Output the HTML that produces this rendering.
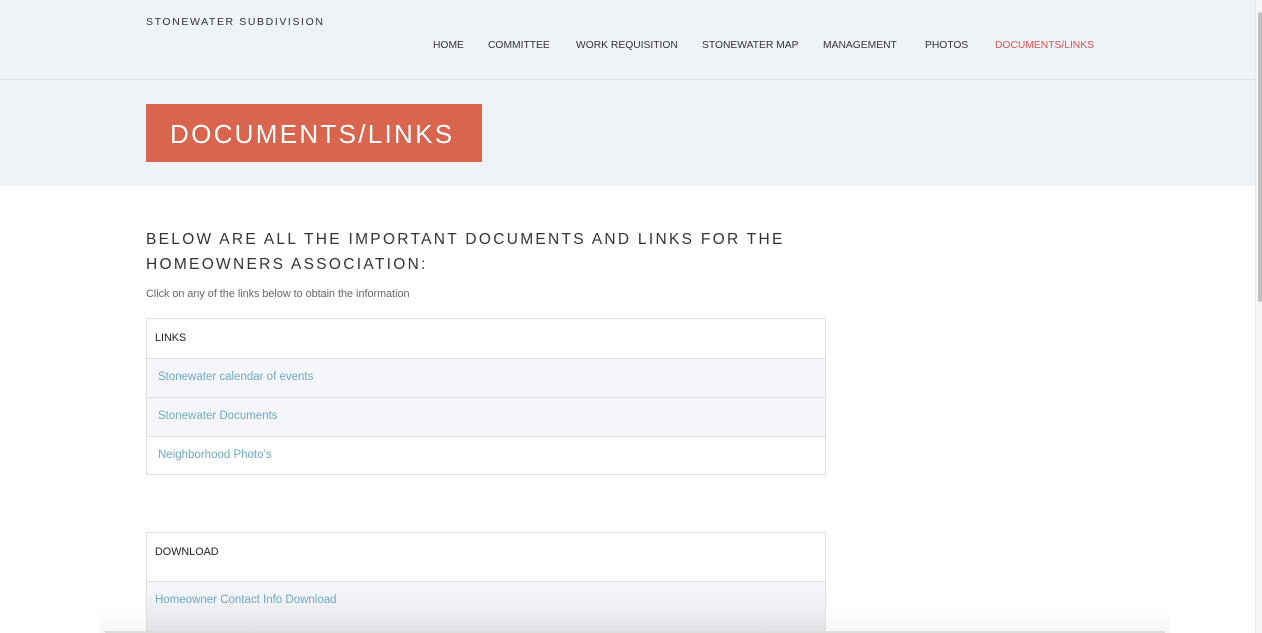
<!DOCTYPE html>
<html><head><meta charset="utf-8"><style>
*{margin:0;padding:0;box-sizing:border-box}
body{width:1262px;height:633px;overflow:hidden;background:#fff;font-family:"Liberation Sans",sans-serif;position:relative}
.a{position:absolute;white-space:nowrap}
#hdr{left:0;top:0;width:1255px;height:186px;background:#eff2f7}
#line{left:0;top:79px;width:1255px;height:1px;background:#dde1e6}
.nav{top:40px;font-size:10.3px;color:#333}
#title{left:146px;top:104px;width:336px;height:58px;background:#d9654f;color:#fff;font-size:26px;letter-spacing:2.3px;line-height:60px;padding-left:24px}
.h{left:146px;font-size:15.5px;letter-spacing:2.3px;color:#333}
.tb{left:146px;width:680px;border:1px solid #e0e0e0;background:#fff}
.row{border-top:1px solid #e0e0e0;font-size:11.5px;padding-left:11px;color:#6fa9c0}
#sb{left:1255px;top:0;width:7px;height:633px;background:#f6f6f6;border-left:1px solid #e8e8e8}
#thumb{left:1258px;top:12px;width:4px;height:290px;background:#c0c0c0;border-radius:2px}
</style></head><body>
<div id="hdr" class="a"></div>
<div id="line" class="a"></div>
<div class="a" style="left:146px;top:16px;font-size:10.5px;letter-spacing:1.6px;color:#333">STONEWATER SUBDIVISION</div>
<div class="a nav" style="left:433px">HOME</div>
<div class="a nav" style="left:488px">COMMITTEE</div>
<div class="a nav" style="left:576px">WORK REQUISITION</div>
<div class="a nav" style="left:702px">STONEWATER MAP</div>
<div class="a nav" style="left:823px">MANAGEMENT</div>
<div class="a nav" style="left:925px">PHOTOS</div>
<div class="a nav" style="left:995px;color:#d9534f">DOCUMENTS/LINKS</div>
<div id="title" class="a">DOCUMENTS/LINKS</div>
<div class="a h" style="top:231px">BELOW ARE ALL THE IMPORTANT DOCUMENTS AND LINKS FOR THE</div>
<div class="a h" style="top:256px">HOMEOWNERS ASSOCIATION:</div>
<div class="a" style="left:146px;top:288px;font-size:10.8px;color:#666">Click on any of the links below to obtain the information</div>
<div class="a tb" style="top:318px;height:157px">
<div style="height:39px;line-height:38px;font-size:10.8px;padding-left:8px;color:#222">LINKS</div>
<div class="row" style="height:39px;line-height:37px;background:#f5f6f9">Stonewater calendar of events</div>
<div class="row" style="height:39px;line-height:37px;background:#f5f6f9">Stonewater Documents</div>
<div class="row" style="height:38px;line-height:36px">Neighborhood Photo’s</div>
</div>
<div class="a tb" style="top:532px;height:100px">
<div style="height:48px;line-height:38px;font-size:10.8px;padding-left:8px;color:#222">DOWNLOAD</div>
<div class="row" style="height:50px;line-height:37px;padding-left:8px;background:linear-gradient(#f6f7fa,#e8e9ec)">Homeowner Contact Info Download</div>
</div>
<div class="a" style="left:100px;top:605px;width:1070px;height:28px;background:linear-gradient(rgba(0,0,0,0),rgba(0,0,0,0.03));pointer-events:none"></div>
<div class="a" style="left:105px;top:631px;width:1060px;height:2px;background:#dcdcdc"></div>
<div id="sb" class="a"></div>
<div id="thumb" class="a"></div>
</body></html>
